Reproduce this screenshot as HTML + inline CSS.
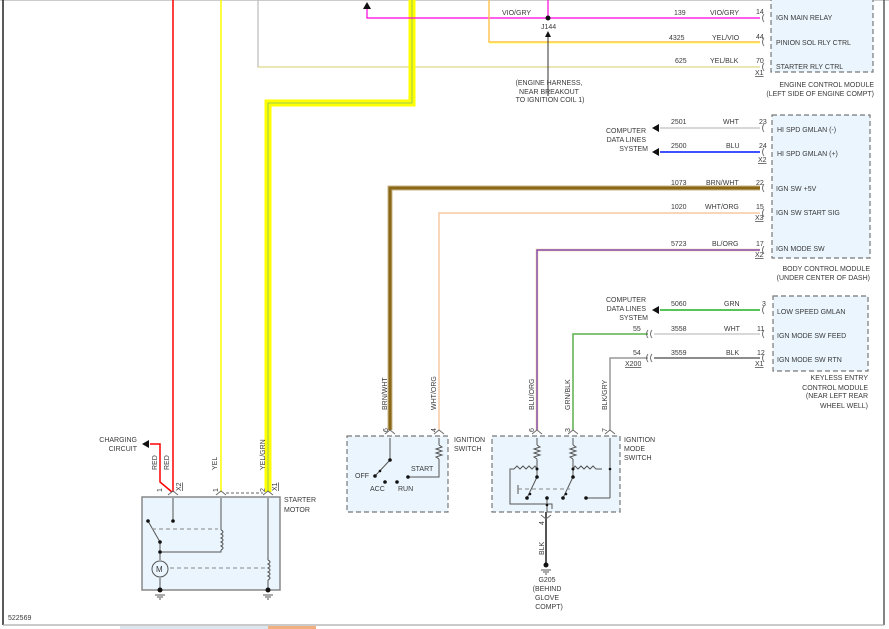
<!DOCTYPE html>
<html><head><meta charset="utf-8"><style>
html,body{margin:0;padding:0;background:#fff;width:889px;height:629px;overflow:hidden}
svg{display:block}
text{font-family:"Liberation Sans",sans-serif;font-size:7px;fill:#3a3a3a}
</style></head><body>
<svg width="889" height="629" viewBox="0 0 889 629" xmlns="http://www.w3.org/2000/svg">
<line x1="0" y1="0.5" x2="889" y2="0.5" stroke="#ccc"/>
<line x1="3" y1="0" x2="3" y2="625" stroke="#222" stroke-width="1.5"/>
<line x1="884" y1="0" x2="884" y2="625" stroke="#333" stroke-width="1.2"/>
<line x1="3" y1="625" x2="884" y2="625" stroke="#aaa" stroke-width="1.2"/>
<rect x="120" y="626" width="150" height="3" fill="#dce6ee"/>
<rect x="268" y="626" width="48" height="3" fill="#f0b080"/>

<g fill="#eaf5fd" stroke="#777" stroke-dasharray="5,3" stroke-width="1.2">
<rect x="771" y="-5" width="102" height="77"/>
<rect x="772" y="115" width="98" height="143"/>
<rect x="773" y="296" width="95" height="75"/>
<rect x="347" y="436" width="101" height="76"/>
<rect x="492" y="436" width="128" height="76"/>
</g>
<rect x="142" y="497" width="138" height="93" fill="#eaf5fd" stroke="#888" stroke-width="1.5"/>

<g fill="none">
<polyline points="258,0 258,67 760,67" stroke="#bbb" stroke-width="1.2"/>
<line x1="258" y1="67" x2="760" y2="67" stroke="#e4e27a" stroke-width="1"/>
<polyline points="412,0 412,103 268,103 268,492" stroke="#ffff00" stroke-width="7"/>
<polyline points="412,0 412,103 268,103 268,492" stroke="#7cbf6a" stroke-width="0.8"/>
<line x1="173" y1="0" x2="173" y2="492" stroke="#f00" stroke-width="1.5"/>
<polyline points="150,444 160,444 160,482 172,492" stroke="#f00" stroke-width="1.5"/>
<line x1="221" y1="0" x2="221" y2="492" stroke="#ffff00" stroke-width="1.5"/>
<polyline points="367,6 367,18 760,18" stroke="#ff00e0" stroke-width="1.2"/>
<line x1="548" y1="0" x2="548" y2="18" stroke="#ff00e0" stroke-width="1.2"/>
<polyline points="489,0 489,42 760,42" stroke="#ffc04a" stroke-width="1.4"/>
<line x1="489" y1="43" x2="760" y2="43" stroke="#ffff40" stroke-width="0.8"/>
<line x1="548" y1="96" x2="548" y2="33" stroke="#333" stroke-width="1"/>
<line x1="660" y1="128" x2="760" y2="128" stroke="#ccc" stroke-width="1.4"/>
<line x1="660" y1="152" x2="760" y2="152" stroke="#0018ff" stroke-width="1.6"/>
<polyline points="390,430 390,188 760,188" stroke="#c8b48a" stroke-width="5"/>
<polyline points="390,430 390,188 760,188" stroke="#8a6818" stroke-width="3"/>
<polyline points="439,430 439,213 760,213" stroke="#f8c8a0" stroke-width="1.5"/>
<polyline points="537,430 537,250 760,250" stroke="#f8c890" stroke-width="2.5"/>
<polyline points="537,430 537,250 760,250" stroke="#6a3cc8" stroke-width="1.2"/>
<line x1="660" y1="310" x2="760" y2="310" stroke="#20b020" stroke-width="1.6"/>
<polyline points="573,430 573,334 648,334" stroke="#5cb04c" stroke-width="1.5"/>
<line x1="654" y1="334" x2="760" y2="334" stroke="#ccc" stroke-width="1.4"/>
<polyline points="610,430 610,358 648,358" stroke="#999" stroke-width="1.5"/>
<line x1="654" y1="358" x2="760" y2="358" stroke="#666" stroke-width="1.6"/>
<line x1="546" y1="512" x2="546" y2="565" stroke="#555" stroke-width="2"/>
</g>
<g fill="#111">
<polygon points="367,2 363,9 371,9"/>
<polygon points="548,31 545,37 551,37"/>
<polygon points="652,128 659,124 659,132"/>
<polygon points="652,152 659,148 659,156"/>
<polygon points="652,310 659,306 659,314"/>
<polygon points="142,444 149,440 149,448"/>
</g>
<circle cx="548" cy="18" r="2.5" fill="#111"/>
<g fill="none" stroke="#666" stroke-width="0.9">
<path d="M764,14 q-3,4 0,8 M764,38 q-3,4 0,8 M764,63 q-3,4 0,8 M764,124 q-3,4 0,8 M764,148 q-3,4 0,8 M764,184 q-3,4 0,8 M764,209 q-3,4 0,8 M764,246 q-3,4 0,8 M764,306 q-3,4 0,8 M764,330 q-3,4 0,8 M764,354 q-3,4 0,8"/>
<path d="M652,330 q-3,4 0,8 M648,330 q-3,4 0,8 M652,354 q-3,4 0,8 M648,354 q-3,4 0,8"/>
<path d="M168,495 l5,-4 l5,4 M216,495 l5,-4 l5,4 M263,495 l5,-4 l5,4 M385,434 l5,-4 l5,4 M434,434 l5,-4 l5,4 M532,434 l5,-4 l5,4 M568,434 l5,-4 l5,4 M605,434 l5,-4 l5,4 M541,515 l5,4 l5,-4"/>
<line x1="226" y1="493" x2="263" y2="493" stroke-dasharray="3,2"/>
</g>

<g fill="none" stroke="#555" stroke-width="1">
<line x1="173" y1="498" x2="173" y2="521"/>
<line x1="221" y1="498" x2="221" y2="530"/>
<path d="M221,530 q4,2 0,4 q4,2 0,4 q4,2 0,4 q4,2 0,4 q4,2 0,4"/>
<polyline points="221,550 221,552 160,552"/>
<line x1="148" y1="521" x2="160" y2="542"/>
<line x1="160" y1="542" x2="160" y2="560"/>
<line x1="160" y1="578" x2="160" y2="590"/>
<circle cx="160" cy="569" r="8" fill="#eaf5fd"/>
<line x1="268" y1="498" x2="268" y2="560"/>
<path d="M268,560 q4,2 0,4 q4,2 0,4 q4,2 0,4 q4,2 0,4 q4,2 0,4"/>
<line x1="268" y1="580" x2="268" y2="590"/>
<g stroke="#888" stroke-dasharray="4,3"><line x1="152" y1="529" x2="218" y2="529"/><line x1="170" y1="568" x2="266" y2="568"/></g>
<path d="M155,595 h10 M157,597 h6 M159,599 h2 M263,595 h10 M265,597 h6 M267,599 h2 M541,570 h10 M543,572 h6 M545,574 h2"/>
</g>
<text x="156" y="572" style="font-size:8px">M</text>
<g fill="#111"><circle cx="173" cy="521" r="1.8"/><circle cx="148" cy="521" r="1.8"/><circle cx="160" cy="542" r="1.8"/><circle cx="160" cy="552" r="1.8"/><circle cx="160" cy="590" r="2.5"/><circle cx="268" cy="590" r="2.5"/><circle cx="546" cy="565" r="2.5"/></g>

<g fill="none" stroke="#555" stroke-width="1">
<polyline points="390,438 390,460 375,476"/>
<line x1="439" y1="438" x2="439" y2="445"/>
<path d="M439,445 l3,2 l-6,2 l6,2 l-6,2 l6,2 l-6,2 l3,2"/>
<polyline points="439,459 439,477 408,477"/>
<line x1="537" y1="438" x2="537" y2="445"/>
<path d="M537,445 l3,2 l-6,2 l6,2 l-6,2 l6,2 l-6,2 l3,2"/>
<line x1="537" y1="459" x2="537" y2="477"/>
<line x1="573" y1="438" x2="573" y2="445"/>
<path d="M573,445 l3,2 l-6,2 l6,2 l-6,2 l6,2 l-6,2 l3,2"/>
<line x1="573" y1="459" x2="573" y2="477"/>
<line x1="610" y1="438" x2="610" y2="498"/>
<polyline points="610,498 586,498"/>
<path d="M537,469 l-2,-3 l-3,3 l-3,-3 l-3,3 l-3,-3 l-3,3 l-3,-3 l-3,3 h-4 v35 h42 v5"/>
<path d="M573,469 l2,-3 l3,3 l3,-3 l3,3 l3,-3 l3,3 l3,-3 l3,3 h6"/>
<line x1="537" y1="477" x2="527" y2="498"/>
<line x1="573" y1="477" x2="563" y2="498"/>
<line x1="547" y1="498" x2="547" y2="512"/>
<line x1="518" y1="485" x2="518" y2="494"/>
<line x1="518" y1="489" x2="570" y2="489" stroke-dasharray="4,3" stroke="#888"/>
</g>
<g fill="#111"><circle cx="390" cy="460" r="1.8"/><circle cx="375" cy="476" r="1.8"/><circle cx="380" cy="471" r="1.3"/><circle cx="385" cy="482" r="1.8"/><circle cx="397" cy="482" r="1.8"/><circle cx="408" cy="477" r="1.8"/>
<circle cx="537" cy="469" r="1.5"/><circle cx="537" cy="477" r="1.8"/><circle cx="527" cy="498" r="1.8"/><circle cx="530" cy="494" r="1.3"/><circle cx="547" cy="498" r="1.8"/><circle cx="547" cy="505" r="1.3"/><circle cx="573" cy="469" r="1.5"/><circle cx="573" cy="477" r="1.8"/><circle cx="563" cy="498" r="1.8"/><circle cx="566" cy="494" r="1.3"/><circle cx="586" cy="498" r="1.8"/><circle cx="610" cy="469" r="1.3"/></g>

<text x="502" y="15">VIO/GRY</text>
<text x="541" y="29">J144</text>
<text x="674" y="15">139</text><text x="710" y="15">VIO/GRY</text><text x="756" y="14">14</text>
<text x="669" y="40">4325</text><text x="712" y="40">YEL/VIO</text><text x="756" y="39">44</text>
<text x="675" y="63">625</text><text x="710" y="63">YEL/BLK</text><text x="756" y="63">70</text>
<text x="755" y="75" text-decoration="underline">X1</text>
<text x="776" y="20">IGN MAIN RELAY</text>
<text x="776" y="45">PINION SOL RLY CTRL</text>
<text x="776" y="69">STARTER RLY CTRL</text>
<text x="874" y="87" text-anchor="end">ENGINE CONTROL MODULE</text>
<text x="874" y="96" text-anchor="end">(LEFT SIDE OF ENGINE COMPT)</text>
<text x="549" y="85" text-anchor="middle">(ENGINE HARNESS,</text>
<text x="549" y="94" text-anchor="middle">NEAR BREAKOUT</text>
<text x="550" y="102" text-anchor="middle">TO IGNITION COIL 1)</text>
<text x="646" y="133" text-anchor="end">COMPUTER</text>
<text x="646" y="142" text-anchor="end">DATA LINES</text>
<text x="648" y="151" text-anchor="end">SYSTEM</text>
<text x="671" y="124">2501</text><text x="723" y="124">WHT</text><text x="759" y="124">23</text>
<text x="671" y="148">2500</text><text x="726" y="148">BLU</text><text x="759" y="148">24</text>
<text x="758" y="162" text-decoration="underline">X2</text>
<text x="777" y="132">HI SPD GMLAN (-)</text>
<text x="777" y="156">HI SPD GMLAN (+)</text>
<text x="671" y="185">1073</text><text x="706" y="185">BRN/WHT</text><text x="756" y="185">22</text>
<text x="776" y="191">IGN SW +5V</text>
<text x="671" y="209">1020</text><text x="705" y="209">WHT/ORG</text><text x="756" y="209">15</text>
<text x="755" y="220" text-decoration="underline">X3</text>
<text x="776" y="215">IGN SW START SIG</text>
<text x="671" y="246">5723</text><text x="712" y="246">BL/ORG</text><text x="756" y="246">17</text>
<text x="755" y="257" text-decoration="underline">X2</text>
<text x="776" y="251">IGN MODE SW</text>
<text x="870" y="271" text-anchor="end">BODY CONTROL MODULE</text>
<text x="870" y="280" text-anchor="end">(UNDER CENTER OF DASH)</text>
<text x="646" y="302" text-anchor="end">COMPUTER</text>
<text x="646" y="311" text-anchor="end">DATA LINES</text>
<text x="648" y="320" text-anchor="end">SYSTEM</text>
<text x="671" y="306">5060</text><text x="724" y="306">GRN</text><text x="762" y="306">3</text>
<text x="777" y="314">LOW SPEED GMLAN</text>
<text x="633" y="331">55</text><text x="671" y="331">3558</text><text x="724" y="331">WHT</text><text x="757" y="331">11</text>
<text x="777" y="338">IGN MODE SW FEED</text>
<text x="633" y="355">54</text><text x="671" y="355">3559</text><text x="726" y="355">BLK</text><text x="757" y="355">12</text>
<text x="625" y="366" text-decoration="underline">X200</text>
<text x="755" y="366" text-decoration="underline">X1</text>
<text x="777" y="362">IGN MODE SW RTN</text>
<text x="868" y="380" text-anchor="end">KEYLESS ENTRY</text>
<text x="868" y="390" text-anchor="end">CONTROL MODULE</text>
<text x="868" y="398" text-anchor="end">(NEAR LEFT REAR</text>
<text x="868" y="408" text-anchor="end">WHEEL WELL)</text>
<g>
<text transform="translate(387,410) rotate(-90)">BRN/WHT</text>
<text transform="translate(436,410) rotate(-90)">WHT/ORG</text>
<text transform="translate(534,410) rotate(-90)">BLU/ORG</text>
<text transform="translate(570,410) rotate(-90)">GRN/BLK</text>
<text transform="translate(607,410) rotate(-90)">BLK/GRY</text>
<text transform="translate(157,470) rotate(-90)">RED</text>
<text transform="translate(169,470) rotate(-90)">RED</text>
<text transform="translate(217,470) rotate(-90)">YEL</text>
<text transform="translate(265,470) rotate(-90)">YEL/GRN</text>
<text transform="translate(544,555) rotate(-90)">BLK</text>
<text transform="translate(388,432) rotate(-90)">6</text>
<text transform="translate(436,432) rotate(-90)">4</text>
<text transform="translate(534,432) rotate(-90)">6</text>
<text transform="translate(570,432) rotate(-90)">3</text>
<text transform="translate(607,432) rotate(-90)">7</text>
<text transform="translate(544,525) rotate(-90)">4</text>
<text transform="translate(162,492) rotate(-90)">1</text>
<text transform="translate(218,492) rotate(-90)">1</text>
<text transform="translate(265,492) rotate(-90)">2</text>
<text transform="translate(181,491) rotate(-90)" text-decoration="underline">X2</text>
<text transform="translate(277,491) rotate(-90)" text-decoration="underline">X1</text>
</g>
<text x="454" y="442">IGNITION</text><text x="454" y="451">SWITCH</text>
<text x="624" y="442">IGNITION</text><text x="624" y="451">MODE</text><text x="624" y="460">SWITCH</text>
<text x="355" y="478">OFF</text><text x="370" y="491">ACC</text><text x="398" y="491">RUN</text><text x="411" y="471">START</text>
<text x="284" y="502">STARTER</text><text x="284" y="512">MOTOR</text>
<text x="137" y="442" text-anchor="end">CHARGING</text><text x="137" y="451" text-anchor="end">CIRCUIT</text>
<text x="547" y="582" text-anchor="middle">G205</text>
<text x="547" y="591" text-anchor="middle">(BEHIND</text>
<text x="547" y="600" text-anchor="middle">GLOVE</text>
<text x="549" y="609" text-anchor="middle">COMPT)</text>
<text x="8" y="620">522569</text>
</svg>
</body></html>
